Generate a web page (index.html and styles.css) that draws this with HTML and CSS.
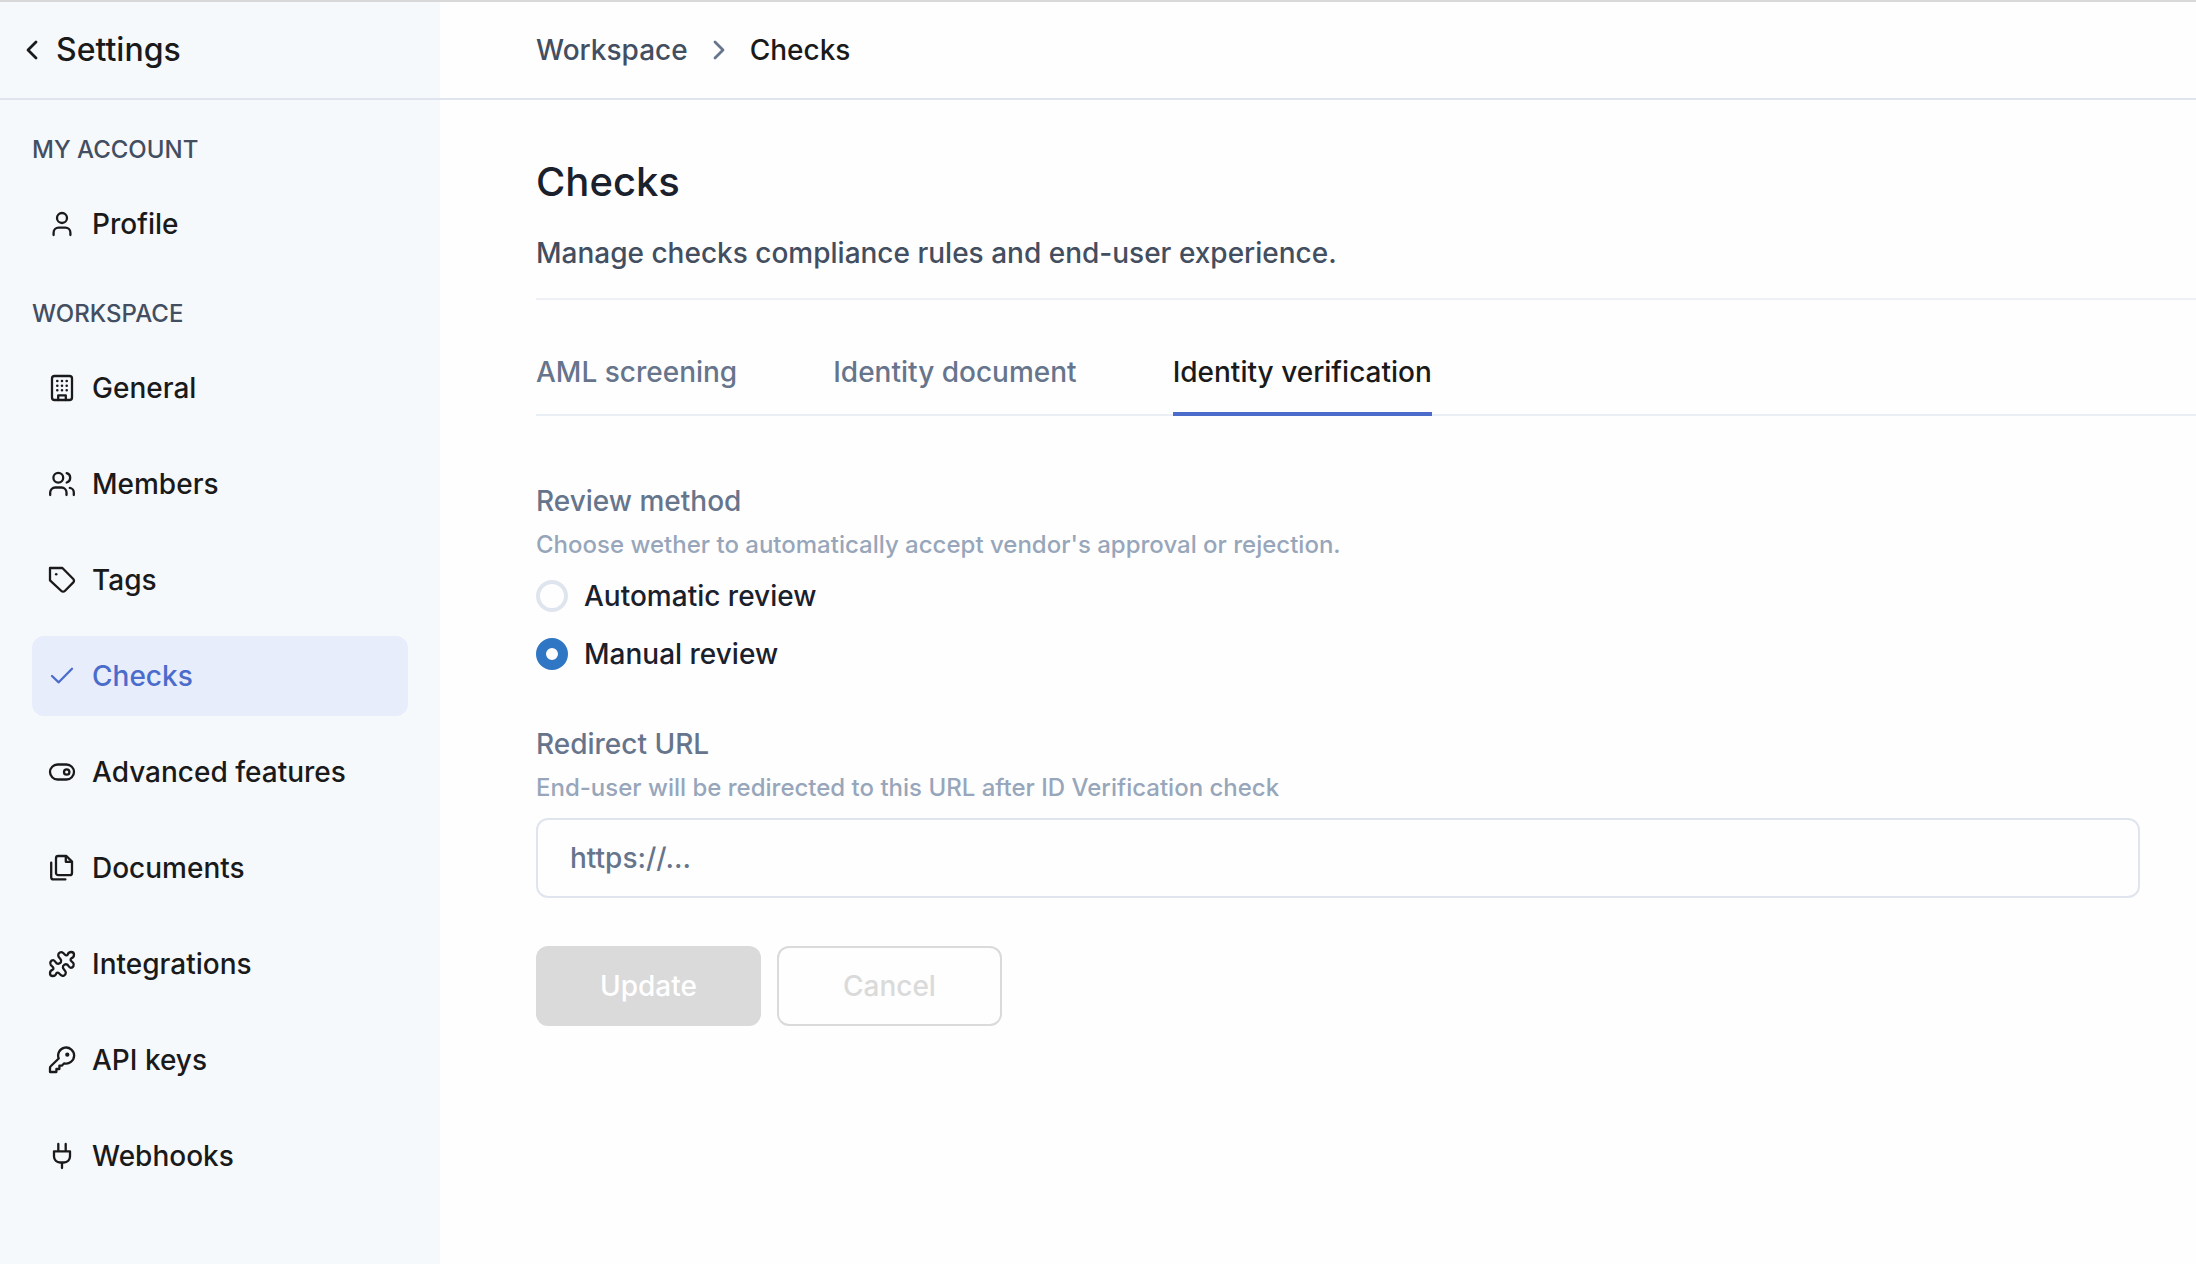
FILE: index.html
```html
<!DOCTYPE html>
<html lang="en">
<head>
  <meta charset="UTF-8">
  <meta name="viewport" content="width=device-width, initial-scale=1.0">
  <title>Settings - Checks</title>
  <link rel="stylesheet" href="styles.css">
</head>
<body>
  <div class="layout">
    <aside class="sidebar">
      <a class="sidebar-header" href="#">
        <svg class="chevron" viewBox="0 0 12 20"><path d="M10 2 2 10l8 8"/></svg>
        <span>Settings</span>
      </a>

      <nav class="sidebar-nav">
        <h2 class="nav-title">MY ACCOUNT</h2>
        <ul class="nav-list">
          <li>
            <a class="nav-link" href="#">
              <svg class="icon" viewBox="0 0 28 28"><circle cx="14" cy="8" r="5"/><path d="M5.6 25v-2.3a5 5 0 0 1 5-5h6.8a5 5 0 0 1 5 5V25"/></svg>
              Profile
            </a>
          </li>
        </ul>

        <h2 class="nav-title">WORKSPACE</h2>
        <ul class="nav-list">
          <li>
            <a class="nav-link" href="#">
              <svg class="icon" viewBox="0 0 28 28">
                <rect x="4" y="2" width="20" height="24" rx="2.6"/>
                <path d="M10.2 26v-4.6h7.6V26"/>
                <path class="dots" d="M9.3 7h.01M14 7h.01M18.7 7h.01M9.3 11.7h.01M14 11.7h.01M18.7 11.7h.01M9.3 16.3h.01M14 16.3h.01M18.7 16.3h.01"/>
              </svg>
              General
            </a>
          </li>
          <li>
            <a class="nav-link" href="#">
              <svg class="icon" viewBox="0 0 28 28"><circle cx="10.3" cy="7.8" r="4.9"/><path d="M2.2 25v-2.5a5 5 0 0 1 5-5h6.3a5 5 0 0 1 5 5V25M18.7 3.1a4.9 4.9 0 0 1 0 9.4M21.8 17.8a4.6 4.6 0 0 1 4 4.7V25"/></svg>
              Members
            </a>
          </li>
          <li>
            <a class="nav-link" href="#">
              <svg class="icon" viewBox="0 0 28 28"><path d="M2 2h12.4l10.9 11a2.4 2.4 0 0 1 0 3.4l-8.5 8.6a2.4 2.4 0 0 1-3.4 0L2 14.3z"/><path class="dots" d="M8.2 8.2h.01"/></svg>
              Tags
            </a>
          </li>
          <li>
            <a class="nav-link active" href="#">
              <svg class="icon" viewBox="0 0 28 28"><path d="m4 14 6.7 6.3L24 6.7"/></svg>
              Checks
            </a>
          </li>
          <li>
            <a class="nav-link" href="#">
              <svg class="icon" viewBox="0 0 28 28"><rect x="2" y="6.5" width="24" height="15" rx="7.5"/><circle cx="18.7" cy="14" r="2.7"/></svg>
              Advanced features
            </a>
          </li>
          <li>
            <a class="nav-link" href="#">
              <svg class="icon" viewBox="0 0 28 28"><path d="M10.2 2h8.2L24 7.6V19a2.2 2.2 0 0 1-2.2 2.2H10.2A2.2 2.2 0 0 1 8 19V4.2A2.2 2.2 0 0 1 10.2 2z"/><path d="M17.8 2.4v5.4h5.6M3.2 8.6v14.6a2.2 2.2 0 0 0 2.2 2.2h12"/></svg>
              Documents
            </a>
          </li>
          <li>
            <a class="nav-link" href="#">
              <svg class="icon" viewBox="0 0 28 28"><path d="M10.2 5.2C10.2 2.8 13 1.3 15 2.8L17 4.8C17.8 5.6 19 5.6 19.6 4.8 20 3.4 21.4 2 23.2 2 25 2 26 3.2 26 4.8 26 6.6 24.6 8 23.2 8.4 22.4 9 22.4 10.2 23.2 11L25.2 13C26.7 15 25.2 17.8 22.8 17.8 21.5 17.8 20.5 16 19.5 14.8 17.5 13.5 14.5 15 14.9 17.5 15.2 19.4 17.8 20.3 17.8 22.8 17.8 25.2 15 26.7 13 25.2L11 23.2C10.2 22.4 9 22.4 8.4 23.2 8 24.6 6.6 26 4.8 26 3 26 2 24.8 2 23.2 2 21.4 3.4 20 4.8 19.6 5.6 19 5.6 17.8 4.8 17L2.8 15C1.3 13 2.8 10.2 5.2 10.2 6.5 10.2 7.5 12 8.5 13.2 10.5 14.5 13.5 13 13.1 10.5 12.8 8.6 10.2 7.7 10.2 5.2z"/></svg>
              Integrations
            </a>
          </li>
          <li>
            <a class="nav-link" href="#">
              <svg class="icon" viewBox="0 0 28 28"><path d="M10.7 12.5 2.7 20.3A2 2 0 0 0 2 21.8V26h6.4v-3h3v-3.3h2.4l2.4-2.4A8 8 0 1 0 10.7 12.5z"/><circle class="fill" cx="19.3" cy="8.7" r="1"/></svg>
              API keys
            </a>
          </li>
          <li>
            <a class="nav-link" href="#">
              <svg class="icon" viewBox="0 0 28 28"><path d="M10.3 2v7M17.7 2v7M6 9.3h16v5.2a6 6 0 0 1-6 6h-4a6 6 0 0 1-6-6zM14 20.5V26"/></svg>
              Webhooks
            </a>
          </li>
        </ul>
      </nav>
    </aside>

    <main class="main">
      <header class="breadcrumb">
        <a href="#">Workspace</a>
        <svg class="chevron" viewBox="0 0 12 20"><path d="m2 2 8 8-8 8"/></svg>
        <span class="current">Checks</span>
      </header>

      <div class="content">
        <div class="page-heading">
          <h1>Checks</h1>
          <p>Manage checks compliance rules and end-user experience.</p>
        </div>

        <div class="tabs">
          <button class="tab" type="button">AML screening</button>
          <button class="tab" type="button">Identity document</button>
          <button class="tab active" type="button">Identity verification</button>
        </div>

        <form class="form">
          <fieldset class="field">
            <legend class="label">Review method</legend>
            <p class="hint">Choose wether to automatically accept vendor's approval or rejection.</p>
            <div class="radios">
              <label class="radio"><input type="radio" name="review" value="automatic"> Automatic review</label>
              <label class="radio"><input type="radio" name="review" value="manual" checked> Manual review</label>
            </div>
          </fieldset>

          <div class="field">
            <label class="label" for="redirect-url">Redirect URL</label>
            <p class="hint">End-user will be redirected to this URL after ID Verification check</p>
            <input class="text-input" id="redirect-url" type="text" placeholder="https://...">
          </div>

          <div class="actions">
            <button class="btn btn-primary" type="submit" disabled>Update</button>
            <button class="btn btn-outline" type="button" disabled>Cancel</button>
          </div>
        </form>
      </div>
    </main>
  </div>
</body>
</html>
```

FILE: styles.css
```css
* {
  box-sizing: border-box;
}

body {
  margin: 0;
  font-family: Inter, sans-serif;
  font-size: 28px;
  font-weight: 500;
  line-height: 42px;
  color: #1a1a1a;
  background: #fefefe;
}

h1, h2, p, ul, fieldset {
  margin: 0;
  padding: 0;
  border: 0;
  font-weight: 500;
}

a {
  color: inherit;
  text-decoration: none;
}

button, input {
  font: inherit;
}

.layout {
  display: flex;
  min-height: 100vh;
  border-top: 2px solid #d8d8d8;
}

/* Sidebar */
.sidebar {
  flex: 0 0 440px;
  background: #f6f9fc;
}

.sidebar-header,
.breadcrumb {
  display: flex;
  align-items: center;
  height: 98px;
  border-bottom: 2px solid #dfe4ee;
}

.sidebar-header {
  gap: 18px;
  padding-left: 26px;
  font-size: 32px;
}

.chevron {
  width: 12px;
  height: 20px;
  fill: none;
  stroke: currentColor;
  stroke-width: 2.8;
  stroke-linecap: round;
  stroke-linejoin: round;
}

.sidebar-nav {
  padding: 32px 32px 0;
}

.nav-title {
  font-size: 24px;
  line-height: 36px;
  color: #434e61;
}

.nav-list {
  display: flex;
  flex-direction: column;
  gap: 16px;
  padding: 16px 0 32px;
  list-style: none;
}

.nav-link {
  display: flex;
  align-items: center;
  gap: 16px;
  height: 80px;
  padding: 0 16px;
  border-radius: 12px;
}

.nav-link.active {
  color: #4c6ccb;
  background: #e8edfb;
}

.icon {
  width: 28px;
  height: 28px;
  fill: none;
  stroke: currentColor;
  stroke-width: 2.3;
  stroke-linecap: round;
  stroke-linejoin: round;
}

.icon .dots {
  stroke-width: 2.6;
}

.icon .fill {
  fill: currentColor;
}

/* Main */
.main {
  flex: 1;
  min-width: 0;
}

.breadcrumb {
  gap: 25px;
  padding-left: 96px;
  color: #434e61;
}

.breadcrumb .chevron {
  color: #66758c;
}

.breadcrumb .current {
  color: #1a1a1a;
}

.content {
  padding: 52px 0 0 96px;
}

.page-heading {
  padding-bottom: 24px;
  border-bottom: 2px solid #edf0f5;
}

h1 {
  font-size: 40px;
  line-height: 60px;
  color: #1a202c;
}

.page-heading p {
  padding-top: 20px;
  color: #434e61;
}

.tabs {
  display: flex;
  gap: 96px;
  margin-top: 32px;
  box-shadow: inset 0 -2px #e9eff5;
}

.tab {
  padding: 19px 0;
  border: 0;
  border-bottom: 4px solid transparent;
  background: none;
  color: #66758c;
}

.tab.active {
  color: #1a1a1a;
  border-color: #4c6ccb;
}

/* Form */
.form {
  padding: 64px 56px 0 0;
}

.field {
  margin-bottom: 48px;
}

.label {
  display: block;
  padding: 0;
  color: #66758c;
}

.hint {
  padding-top: 5px;
  font-size: 24px;
  line-height: 36px;
  color: #97a6ba;
}

.radios {
  display: flex;
  flex-direction: column;
  gap: 16px;
  padding-top: 12px;
}

.radio {
  display: flex;
  align-items: center;
  gap: 16px;
  color: #1a202c;
}

.radio input {
  appearance: none;
  width: 32px;
  height: 32px;
  margin: 0;
  border: 4px solid #dfe5ee;
  border-radius: 50%;
}

.radio input:checked {
  border: 10px solid #2f76c4;
}

.text-input {
  display: block;
  width: 100%;
  height: 80px;
  margin-top: 12px;
  padding: 0 32px;
  border: 2px solid #dfe4ee;
  border-radius: 12px;
  background: none;
}

.text-input::placeholder {
  color: #66758c;
}

.actions {
  display: flex;
  gap: 16px;
}

.btn {
  height: 80px;
  padding: 0 64px;
  border: 0;
  border-radius: 12px;
}

.btn-primary {
  background: #dadada;
  color: #fff;
}

.btn-outline {
  border: 2px solid #dadada;
  background: none;
  color: #dadada;
}
```
